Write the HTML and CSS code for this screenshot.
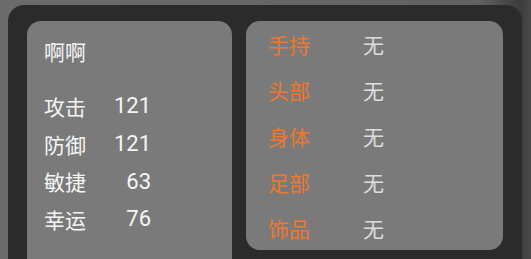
FILE: index.html
```html
<!DOCTYPE html>
<html lang="zh">
<head>
    <meta charset="utf-8">
    <title>角色属性</title>
    <link rel="stylesheet" href="styles.css">
</head>
<body>
    <div class="panel">
        <div class="card stats">
            <div class="name">啊啊</div>
            <div class="stat-list">
                <span class="label">攻击</span><span class="value">121</span>
                <span class="label">防御</span><span class="value">121</span>
                <span class="label">敏捷</span><span class="value">63</span>
                <span class="label">幸运</span><span class="value">76</span>
            </div>
        </div>
        <div class="card equip">
            <div class="slot"><span class="slot-name">手持</span><span class="slot-item">无</span></div>
            <div class="slot"><span class="slot-name">头部</span><span class="slot-item">无</span></div>
            <div class="slot"><span class="slot-name">身体</span><span class="slot-item">无</span></div>
            <div class="slot"><span class="slot-name">足部</span><span class="slot-item">无</span></div>
            <div class="slot"><span class="slot-name">饰品</span><span class="slot-item">无</span></div>
        </div>
    </div>
</body>
</html>
```

FILE: styles.css
```css
body {
    margin: 0;
    height: 259px;
    overflow: hidden;
    font-family: Roboto, "Noto Sans CJK SC", sans-serif;
    font-size: 21px;
    background: linear-gradient(to right, #6c6c6c 0%, #626262 90%, #3c3c3c 98%, #4a4a4a 100%);
}
.panel {
    margin: 5px 0 0 8px;
    width: 514px;
    height: 254px;
    box-sizing: border-box;
    padding: 16px 19px 0 19px;
    background-color: #2b2b2b;
    border-radius: 16px 16px 0 0;
    display: flex;
    align-items: flex-start;
    gap: 14px;
}
.card {
    background-color: #7a7a7a;
    border-radius: 14px;
    box-sizing: border-box;
}
.stats {
    width: 205px;
    height: 238px;
    border-radius: 14px 14px 0 0;
    padding: 14px 0 0 17px;
    color: #f5f5f5;
}
.name {
    line-height: 36px;
    margin-bottom: 16px;
}
.stat-list {
    display: grid;
    grid-template-columns: 68px 39px;
    grid-auto-rows: 37.7px;
    align-items: center;
}
.value {
    text-align: right;
    font-size: 22px;
}
.equip {
    width: 257px;
    height: 229px;
    padding: 2px 0 0 22px;
}
.slot {
    display: flex;
    line-height: 46px;
}
.slot-name {
    width: 95px;
    color: #f0782a;
}
.slot-item {
    color: #dedede;
}
```
